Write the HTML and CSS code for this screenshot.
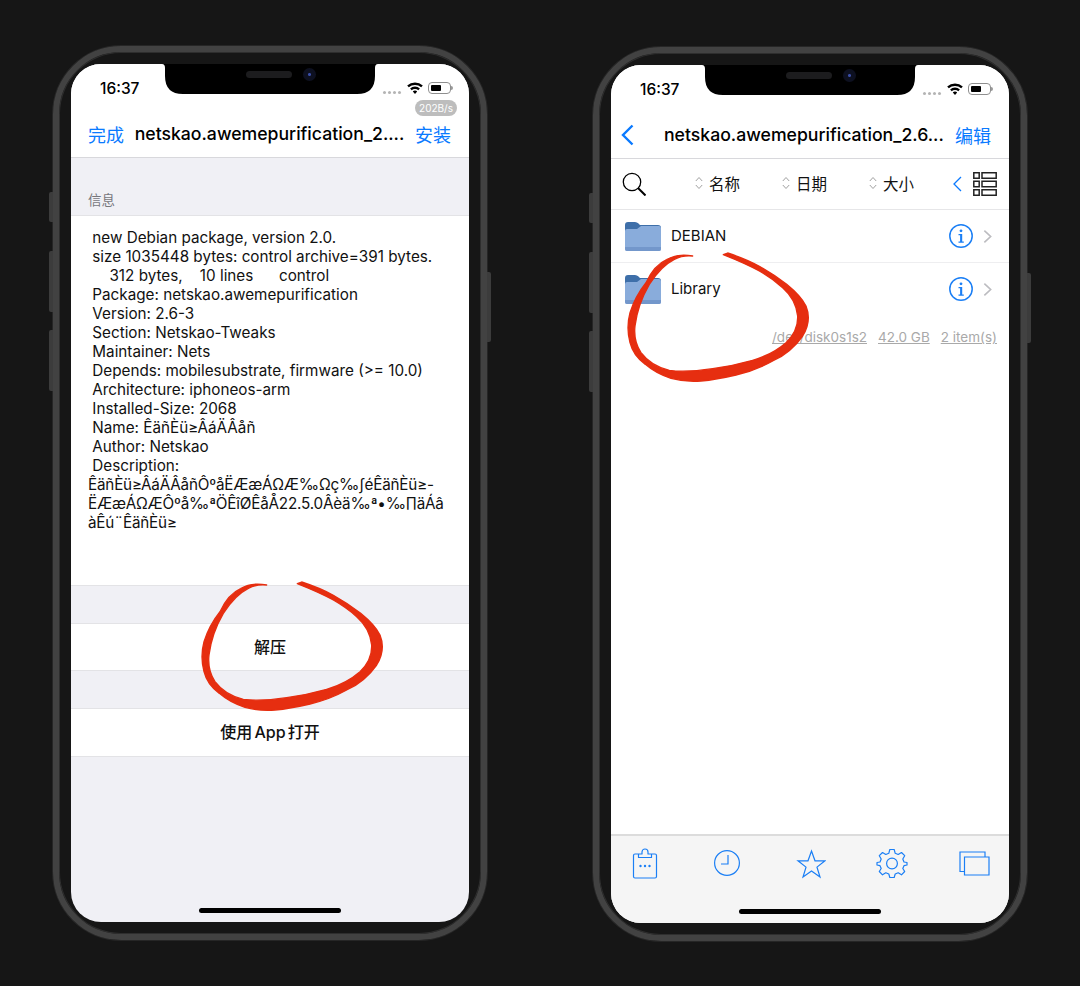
FILE: index.html
```html
<!DOCTYPE html>
<html lang="zh">
<head>
<meta charset="utf-8">
<title>Filza</title>
<link rel="stylesheet" href="styles.css">
</head>
<body>
<svg class="defs" width="0" height="0" aria-hidden="true">
  <symbol id="scribble" viewBox="0 0 660 570">
    <path fill="#e62e10" stroke="#e62e10" stroke-width="4" stroke-linejoin="round" d="M260 45Q215 36 182 56Q145 72 120 125Q88 165 72 215Q60 260 72 305Q82 345 118 370Q150 398 195 412Q240 424 285 420Q330 416 390 402Q450 388 500 360Q555 335 590 285Q618 240 600 195Q585 165 542 130Q500 98 460 76Q420 54 365 36L352 41Q420 68 460 90Q500 113 530 140Q570 175 575 225Q577 270 540 305Q500 340 440 358Q380 375 320 383Q240 395 190 388Q135 375 105 335Q82 300 87 255Q95 190 130 130Q165 75 205 55Q230 42 260 45Z"/>
  </symbol>
  <symbol id="notch" viewBox="0 0 216 31">
    <path fill="#000" d="M0 0H216Q213 0 213 4V12Q213 30 195 30H21Q3 30 3 12V4Q3 0 0 0Z"/>
  </symbol>
  <symbol id="folder" viewBox="0 0 36 29">
    <path fill="#3e6fa9" d="M0 3Q0 0 3 0H10Q12 0 13.500 1.500L15 3H33Q36 3 36 6V12H0Z"/>
    <path fill="#89acdb" d="M0 9Q0 7 2 7H12L16 4H34Q36 4 36 6V27Q36 29 34 29H2Q0 29 0 27Z"/>
    <path fill="#7397cb" d="M0 25H36V27Q36 29 34 29H2Q0 29 0 27Z"/>
  </symbol>
  <symbol id="info" viewBox="0 0 24 24">
    <circle cx="12" cy="12" r="11.200" fill="none" stroke="#1b7ff5" stroke-width="1.500"/>
    <circle cx="12" cy="6.800" r="1.400" fill="#1b7ff5"/>
    <path fill="#1b7ff5" d="M9.500 10H13.200V17.500H14.800V18.800H9.500V17.500H11.100V11.200H9.500Z"/>
  </symbol>
  <symbol id="chev" viewBox="0 0 10 16">
    <path fill="none" stroke="#bcbcc0" stroke-width="1.800" d="M1.500 1.500L8.500 8L1.500 14.500"/>
  </symbol>
  <symbol id="sort" viewBox="0 0 8 14">
    <path fill="none" stroke="#a0a0a0" stroke-width="1" d="M.8 5L4 1.500L7.200 5M.8 9L4 12.500L7.200 9"/>
  </symbol>
</svg>

<main class="stage">
  <section class="phone">
    <span class="side side-mute"></span><span class="side side-up"></span><span class="side side-down"></span><span class="side side-power"></span>
    <div class="screen screen-grey">
      <svg class="notch"><use href="#notch"/></svg>
      <span class="speaker"></span><span class="camera"></span>
      <div class="status">
        <span class="time">16:37</span>
        <span class="dots"><i></i><i></i><i></i><i></i></span>
        <svg class="wifi" viewBox="0 0 16 12"><path fill="#000" d="M8 .5Q3.500 .5 .2 3.600L1.800 5.300Q4.500 2.900 8 2.900T14.200 5.300L15.800 3.600Q12.500 .5 8 .5ZM8 4.600Q5.200 4.600 3.100 6.600L4.700 8.300Q6 7 8 7T11.300 8.300L12.900 6.600Q10.800 4.600 8 4.600ZM8 8.600Q6.700 8.600 5.800 9.500L8 11.900L10.200 9.500Q9.300 8.600 8 8.600Z"/></svg>
        <span class="battery"><i></i></span>
      </div>
      <span class="speed">202B/s</span>
      <nav class="nav">
        <span class="nav-link">完成</span>
        <span class="title">netskao.awemepurification_2....</span>
        <span class="nav-link">安装</span>
      </nav>
      <div class="section-head">信息</div>
      <div class="info-text"> new Debian package, version 2.0.
 size 1035448 bytes: control archive=391 bytes.
     312 bytes,    10 lines      control
 Package: netskao.awemepurification
 Version: 2.6-3
 Section: Netskao-Tweaks
 Maintainer: Nets
 Depends: mobilesubstrate, firmware (&gt;= 10.0)
 Architecture: iphoneos-arm
 Installed-Size: 2068
 Name: ÊäñÈü≥ÂáÄÂåñ
 Author: Netskao
 Description:
<span class="garble">ÊäñÈü≥ÂáÄÂåñÔºåËÆæÁΩÆ‰Ωç‰∫éÊäñÈü≥-
ËÆæÁΩÆÔºå‰ªÖÊîØÊåÅ22.5.0Âèä‰ª•‰∏äÁâ
àÊú¨ÊäñÈü≥</span></div>
      <div class="action">解压</div>
      <div class="action">使用 App 打开</div>
      <svg class="mark mark-left"><use href="#scribble"/></svg>
      <span class="home"></span>
    </div>
  </section>

  <section class="phone phone-right">
    <span class="side side-mute"></span><span class="side side-up"></span><span class="side side-down"></span><span class="side side-power"></span>
    <div class="screen">
      <svg class="notch"><use href="#notch"/></svg>
      <span class="speaker"></span><span class="camera"></span>
      <div class="status">
        <span class="time">16:37</span>
        <span class="dots"><i></i><i></i><i></i><i></i></span>
        <svg class="wifi" viewBox="0 0 16 12"><path fill="#000" d="M8 .5Q3.500 .5 .2 3.600L1.800 5.300Q4.500 2.900 8 2.900T14.200 5.300L15.800 3.600Q12.500 .5 8 .5ZM8 4.600Q5.200 4.600 3.100 6.600L4.700 8.300Q6 7 8 7T11.300 8.300L12.900 6.600Q10.800 4.600 8 4.600ZM8 8.600Q6.700 8.600 5.800 9.500L8 11.900L10.200 9.500Q9.300 8.600 8 8.600Z"/></svg>
        <span class="battery"><i></i></span>
      </div>
      <nav class="nav nav-files">
        <svg class="back" viewBox="0 0 13 22"><path fill="none" stroke="#0a7aff" stroke-width="2.400" d="M11.500 1.500L2 11L11.500 20.500"/></svg>
        <span class="title title-files">netskao.awemepurification_2.6...</span>
        <span class="nav-link">编辑</span>
      </nav>
      <div class="tools">
        <svg class="search" viewBox="0 0 24 24"><circle cx="10" cy="10" r="8.700" fill="none" stroke="#000" stroke-width="1.300"/><path stroke="#000" stroke-width="2" d="M16 16L23.500 23.500"/></svg>
        <span class="sort"><svg><use href="#sort"/></svg>名称</span>
        <span class="sort"><svg><use href="#sort"/></svg>日期</span>
        <span class="sort sort-last"><svg><use href="#sort"/></svg>大小</span>
        <svg class="collapse" viewBox="0 0 9 16"><path fill="none" stroke="#0a7aff" stroke-width="1.300" d="M8 1L1 8L8 15"/></svg>
        <svg class="grid" viewBox="0 0 24 24"><path fill="none" stroke="#222" stroke-width="1.500" d="M.8.800H6.200V6.200H.8ZM9 .8H23.200V6.200H9ZM.8 9.300H6.200V14.700H.8ZM9 9.300H23.200V14.700H9ZM.8 17.800H6.200V23.200H.8ZM9 17.800H23.200V23.200H9Z"/></svg>
      </div>
      <div class="files">
        <div class="row"><svg class="folder"><use href="#folder"/></svg><span class="row-name">DEBIAN</span><svg class="info"><use href="#info"/></svg><svg class="chev"><use href="#chev"/></svg></div>
        <div class="row row-plain"><svg class="folder"><use href="#folder"/></svg><span class="row-name">Library</span><svg class="info"><use href="#info"/></svg><svg class="chev"><use href="#chev"/></svg></div>
        <div class="summary"><u>/dev/disk0s1s2</u><u>42.0 GB</u><u>2 item(s)</u></div>
      </div>
      <div class="tabs">
        <svg viewBox="0 0 32 32"><g fill="none" stroke="#1b7ff5" stroke-width="1.200" stroke-linejoin="round"><path d="M9.500 7H6Q4.500 7 4.500 8.500V29.500Q4.500 31 6 31H26Q27.500 31 27.500 29.500V8.500Q27.500 7 26 7H22.500V10.500H9.500V7H13V5A3 3 0 0 1 19 5V7H22.500"/></g><g fill="#1b7ff5"><circle cx="11.500" cy="19" r="1.200"/><circle cx="16" cy="19" r="1.200"/><circle cx="20.500" cy="19" r="1.200"/></g></svg>
        <svg viewBox="0 0 32 32"><g fill="none" stroke="#1b7ff5" stroke-width="1.200"><circle cx="16" cy="16" r="12.400"/><path d="M17 8V17H10"/></g></svg>
        <svg viewBox="0 0 32 32"><path fill="none" stroke="#1b7ff5" stroke-width="1.200" d="M17.500 4L21 13.800H31L23 20.100L26 30L17.500 24.100L9 30L12 20.100L4 13.800H14Z"/></svg>
        <svg viewBox="0 0 32 32"><g fill="none" stroke="#1b7ff5" stroke-width="1.200" stroke-linejoin="round"><circle cx="16" cy="16.500" r="5.400"/><path d="M13.800 2.500H18.200L19.200 6.300L22.200 7.500L25.500 5.500L28.700 8.700L26.800 12L28 15L31 15.500V18L28 18.700L26.800 21.500L28.700 24.500L25.500 27.800L22.200 25.800L19.200 27L18.200 30.500H13.800L12.800 27L9.800 25.800L6.500 27.800L3.300 24.500L5.200 21.500L4 18.700L1 18V15.500L4 15L5.200 12L3.300 8.700L6.500 5.500L9.800 7.500L12.800 6.300Z"/></g></svg>
        <svg viewBox="0 0 32 32"><g fill="none" stroke="#1b7ff5" stroke-width="1.200"><path d="M6.500 24.500H2V5H27V10"/><path d="M6.500 10H31V28H6.500Z"/></g></svg>
      </div>
      <svg class="mark mark-right"><use href="#scribble"/></svg>
      <span class="home"></span>
    </div>
  </section>
</main>
</body>
</html>
```
FILE: styles.css
```css
* { box-sizing: border-box; }
html, body { margin: 0; height: 986px; overflow: hidden; background: #161616; }
body { font-family: Inter, "Noto Sans CJK SC", "Liberation Sans", sans-serif; color: #000; }
.defs { position: absolute; }
svg { display: block; }

.stage { display: flex; gap: 106px; padding: 46px 53px 0; }
.phone {
  position: relative;
  width: 434px; height: 894px;
  padding: 12px;
  border: 6px solid #424242;
  border-radius: 68px;
  box-shadow: inset 0 0 0 1px #2e2e2e, 0 0 0 1px #262626;
}
.phone-right { margin-top: 1px; }
.side { position: absolute; background: #3c3c3c; }
.side-mute { left: -10px; top: 140px; width: 4px; height: 30px; border-radius: 2px 0 0 2px; }
.side-up { left: -10px; top: 199px; width: 4px; height: 61px; border-radius: 2px 0 0 2px; }
.side-down { left: -10px; top: 278px; width: 4px; height: 61px; border-radius: 2px 0 0 2px; }
.side-power { right: -10px; top: 220px; width: 4px; height: 70px; border-radius: 0 2px 2px 0; }

.screen {
  position: relative;
  display: flex; flex-direction: column;
  width: 398px; height: 858px;
  overflow: hidden;
  border-radius: 30px;
  background: #fff;
}
.screen-grey { background: #f0f0f5; }
.notch { position: absolute; left: 91px; top: 0; width: 216px; height: 31px; }
.speaker { position: absolute; left: 175px; top: 7px; width: 46px; height: 7px; border-radius: 4px; background: #1c1c1e; }
.camera { position: absolute; left: 232px; top: 4px; width: 13px; height: 13px; border-radius: 50%; background: radial-gradient(circle, #3a4ea8 0 1px, #0d1020 2px 100%); }

.status { display: flex; align-items: center; height: 48px; padding: 12px 18px 12px 29px; background: #fff; }
.time { flex: 1; font-size: 15.500px; font-weight: 500; }
.dots { display: flex; gap: 2px; margin-right: 6px; padding-top: 8px; }
.dots i { width: 3px; height: 3px; border-radius: 50%; background: #b4b4b4; }
.wifi { width: 16px; height: 12px; margin-right: 5px; }
.battery { position: relative; width: 23px; height: 12px; padding: 2px; border: 1px solid #8f8f8f; border-radius: 4px; }
.battery i { display: block; width: 10px; height: 6px; border-radius: 1px; background: #000; }
.battery::after { content: ""; position: absolute; right: -3px; top: 3px; width: 2px; height: 4px; border-radius: 0 2px 2px 0; background: #999; }
.speed { position: absolute; right: 12px; top: 36px; width: 42px; height: 16px; border-radius: 8px; background: #bdbdbd; color: #fff; font-size: 10px; line-height: 16px; text-align: center; }

.nav { display: flex; align-items: center; height: 46px; padding: 0 18px 2px 17px; background: #fff; border-bottom: 1px solid #d8d8dc; }
.nav-link { flex: none; font-size: 18px; color: #0a7aff; }
.title { flex: 1; font-size: 17.650px; font-weight: 500; text-align: center; white-space: nowrap; overflow: hidden; }
.nav-files { padding-left: 10px; }
.back { width: 13px; height: 22px; flex: none; }
.title-files { margin-left: 30px; text-align: left; }

.section-head { height: 58px; padding: 33px 0 0 17px; border-bottom: 1px solid #e3e3e6; font-size: 13.500px; line-height: 18px; color: #77777c; }
.info-text { height: 370px; padding: 12px 17px 0; border-bottom: 1px solid #e3e3e6; background: #fff; font-size: 15.250px; line-height: 19px; white-space: pre; color: #111; }
.garble { letter-spacing: -.2px; }
.action { height: 48px; margin-top: 37px; border-top: 1px solid #e3e3e6; border-bottom: 1px solid #e3e3e6; background: #fff; font-size: 16px; font-weight: 500; word-spacing: -2px; line-height: 47px; text-align: center; color: #111; }
.action + .action { height: 49px; }

.tools { display: flex; align-items: center; height: 51px; padding-left: 11px; border-bottom: 1px solid #e6e6e8; font-size: 15.500px; color: #111; }
.search { width: 24px; height: 24px; margin-right: 49px; }
.sort { display: flex; align-items: center; gap: 6px; width: 87px; margin-bottom: 2px; }
.sort svg { width: 8px; height: 14px; }
.sort-last { width: 84px; }
.collapse { width: 9px; height: 16px; margin-right: 11px; }
.grid { width: 24px; height: 24px; }

.files { flex: 1; }
.row { display: flex; align-items: center; height: 53px; padding: 0 17px 0 14px; border-bottom: 1px solid #eeeef0; font-size: 15px; color: #111; }
.row-plain { border-bottom-color: transparent; }
.folder { width: 36px; height: 29px; margin-right: 10px; }
.row-name { flex: 1; margin-bottom: 2px; }
.info { width: 24px; height: 24px; margin-right: 10px; }
.chev { width: 9px; height: 15px; }
.summary { display: flex; justify-content: flex-end; gap: 11px; padding: 12px 12px 0 0; font-size: 13.500px; line-height: 18px; color: #a9a9a9; }

.tabs { display: flex; justify-content: space-between; align-items: flex-start; height: 89px; padding: 11px 19px 0 18px; border-top: 2px solid #dcdcdc; background: #f5f5f5; }
.tabs svg { width: 32px; height: 32px; }

.mark { position: absolute; width: 220px; height: 190px; }
.mark-left { left: 109px; top: 506px; }
.mark-right { left: -5px; top: 176px; }
.home { position: absolute; left: 128px; bottom: 9px; width: 142px; height: 5px; border-radius: 3px; background: #000; }
```
